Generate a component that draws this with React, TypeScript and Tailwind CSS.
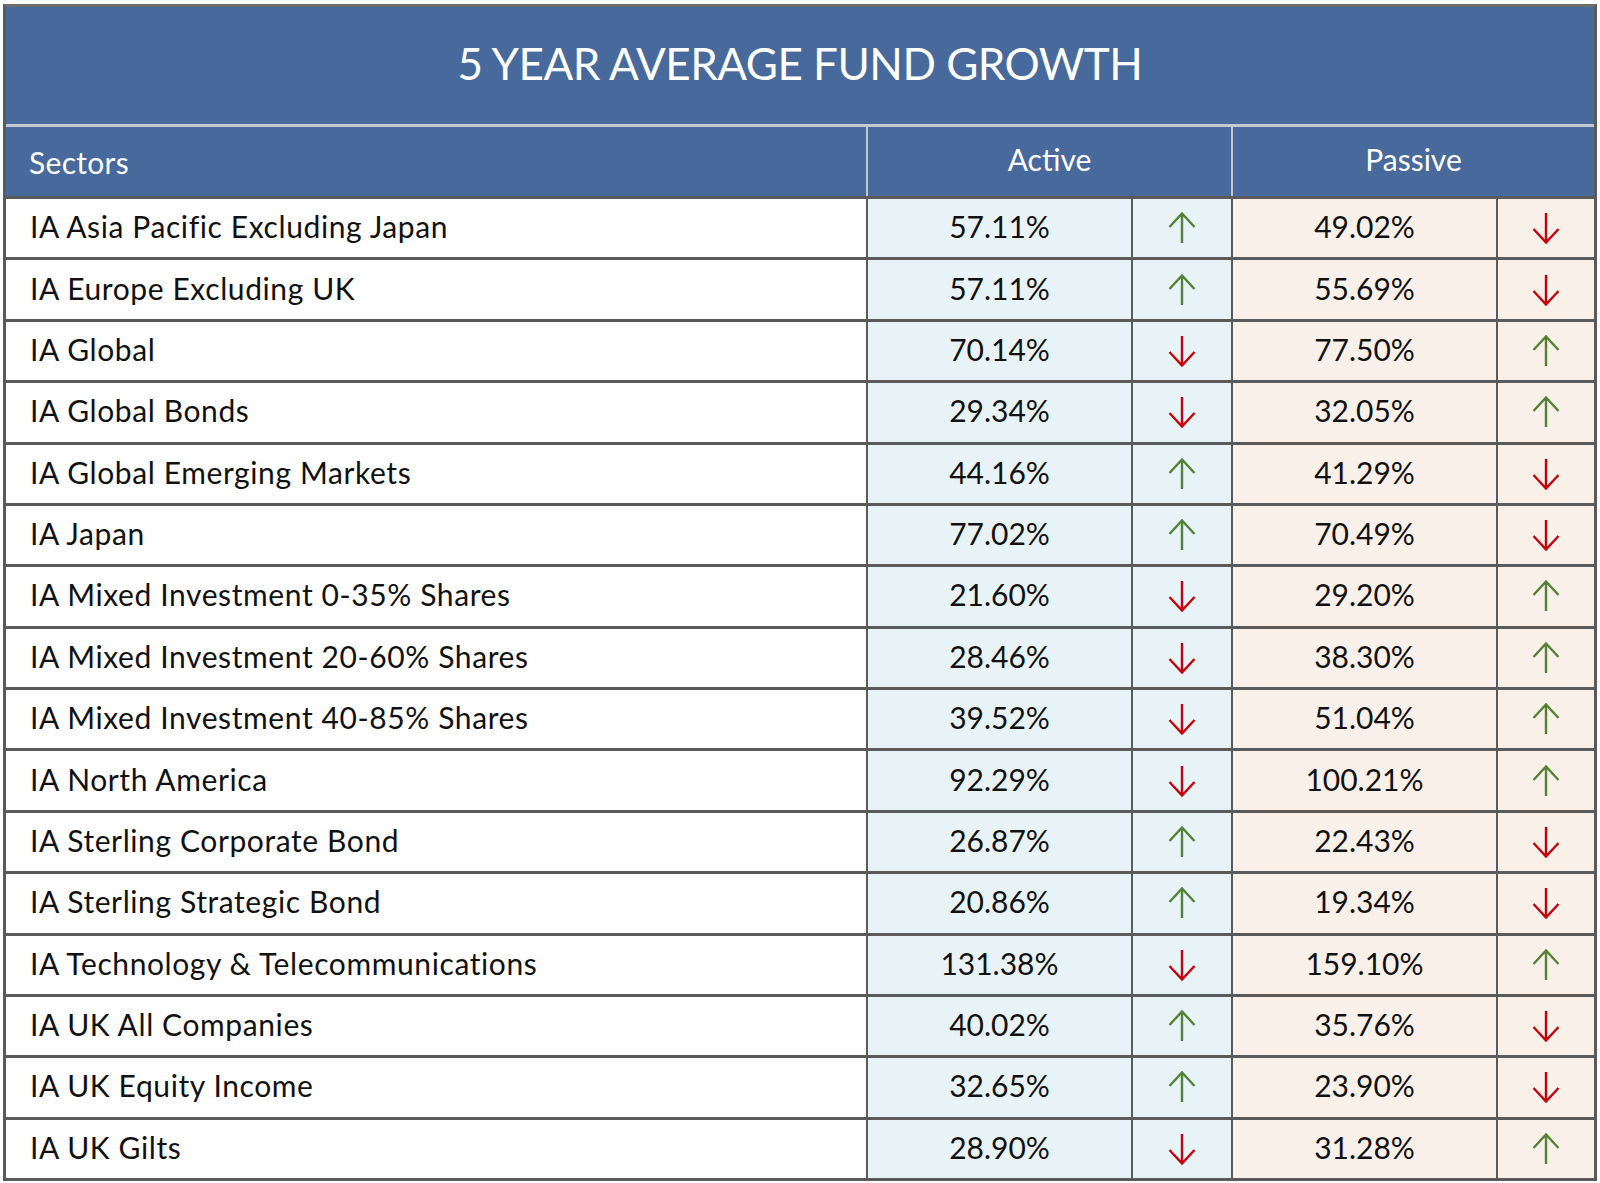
import React from 'react';

type Row = { sector: string; active: string; passive: string; activeUp: boolean };

// active up always means passive down in this table
const rows: Row[] = [
  { sector: 'IA Asia Pacific Excluding Japan', active: '57.11%', passive: '49.02%', activeUp: true },
  { sector: 'IA Europe Excluding UK', active: '57.11%', passive: '55.69%', activeUp: true },
  { sector: 'IA Global', active: '70.14%', passive: '77.50%', activeUp: false },
  { sector: 'IA Global Bonds', active: '29.34%', passive: '32.05%', activeUp: false },
  { sector: 'IA Global Emerging Markets', active: '44.16%', passive: '41.29%', activeUp: true },
  { sector: 'IA Japan', active: '77.02%', passive: '70.49%', activeUp: true },
  { sector: 'IA Mixed Investment 0-35% Shares', active: '21.60%', passive: '29.20%', activeUp: false },
  { sector: 'IA Mixed Investment 20-60% Shares', active: '28.46%', passive: '38.30%', activeUp: false },
  { sector: 'IA Mixed Investment 40-85% Shares', active: '39.52%', passive: '51.04%', activeUp: false },
  { sector: 'IA North America', active: '92.29%', passive: '100.21%', activeUp: false },
  { sector: 'IA Sterling Corporate Bond', active: '26.87%', passive: '22.43%', activeUp: true },
  { sector: 'IA Sterling Strategic Bond', active: '20.86%', passive: '19.34%', activeUp: true },
  { sector: 'IA Technology & Telecommunications', active: '131.38%', passive: '159.10%', activeUp: false },
  { sector: 'IA UK All Companies', active: '40.02%', passive: '35.76%', activeUp: true },
  { sector: 'IA UK Equity Income', active: '32.65%', passive: '23.90%', activeUp: true },
  { sector: 'IA UK Gilts', active: '28.90%', passive: '31.28%', activeUp: false },
];

function Arrow({ up }: { up: boolean }) {
  return (
    <svg width="28" height="32" viewBox="0 0 28 32" fill="none" className={up ? '' : 'rotate-180'}>
      <path
        d="M14 1.5V31M1.5 15L14 1.5L26.5 15"
        stroke={up ? '#548235' : '#c8000a'}
        strokeWidth="2.4"
        strokeLinejoin="miter"
      />
    </svg>
  );
}

export default function App() {
  return (
    <div className="min-h-[1183px] bg-white pt-[4px] pl-[3px] font-['Lato','Liberation_Sans',sans-serif]">
      <div className="w-[1594px] border-[3px] border-t-[3px] border-[#5a5a5a] border-t-[#6e6e6e]">
        {/* title band */}
        <div className="flex h-[117px] items-center justify-center bg-[#47699c] pb-[6px] text-[44px] tracking-[-0.5px] text-white">
          5 YEAR AVERAGE FUND GROWTH
        </div>
        <div className="h-[3px] bg-[#c4c8cf]" />

        {/* column headers */}
        <div className="grid h-[69px] grid-cols-[860px_365px_363px] bg-[#47699c] text-[30px] text-white">
          <div className="flex items-center pl-[23px] pt-[2px] tracking-[0.3px]">Sectors</div>
          <div className="flex items-center justify-center border-l-2 border-[#c2c6cc] pb-[5px]">Active</div>
          <div className="flex items-center justify-center border-l-2 border-[#c2c6cc] pb-[5px]">Passive</div>
        </div>

        {/* data rows */}
        <div className="grid auto-rows-[61.375px] grid-cols-[860px_265px_100px_265px_98px] text-[30px] text-[#111]">
          {rows.map((r) => (
            <React.Fragment key={r.sector}>
              <div className="flex items-center border-t-[3px] border-[#5a5a5a] bg-white pb-[3px] pl-[24px] tracking-[0.6px]">
                {r.sector}
              </div>
              <div className="flex items-center justify-center border-t-[3px] border-l-2 border-[#5a5a5a] bg-[#e8f3f8] pb-[3px]">
                {r.active}
              </div>
              <div className="flex items-center justify-center border-t-[3px] border-l-2 border-[#5a5a5a] bg-[#e8f3f8]">
                <Arrow up={r.activeUp} />
              </div>
              <div className="flex items-center justify-center border-t-[3px] border-l-2 border-[#5a5a5a] bg-[#faf0ea] pb-[3px]">
                {r.passive}
              </div>
              <div className="flex items-center justify-center border-t-[3px] border-l-2 border-[#5a5a5a] bg-[#faf0ea]">
                <Arrow up={!r.activeUp} />
              </div>
            </React.Fragment>
          ))}
        </div>
      </div>
    </div>
  );
}
